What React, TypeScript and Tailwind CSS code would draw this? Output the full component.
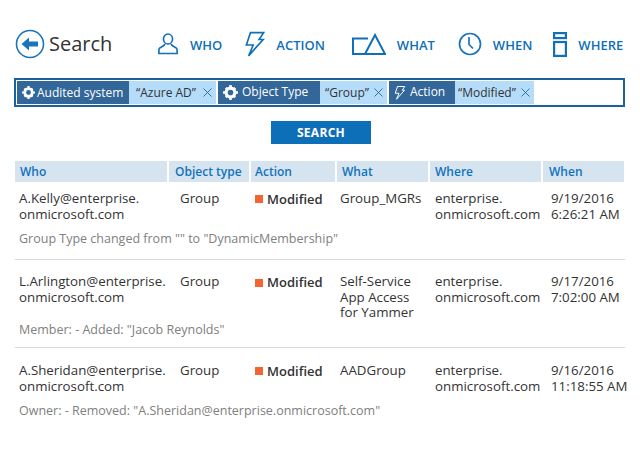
import type { ReactNode } from 'react';

const font = { fontFamily: '"Open Sans", "Noto Sans", sans-serif' };

const Back = () => (
  <svg width="30" height="30" viewBox="0 0 30 30" fill="none">
    <circle cx="15" cy="15" r="13.5" stroke="#1a74bb" strokeWidth="1.6" />
    <path d="M6.5 15 L14 8.5 V12.5 H23 V17.5 H14 V21.5 Z" fill="#1a74bb" />
  </svg>
);
const Who = () => (
  <svg width="20" height="24" viewBox="0 0 22 24" fill="none" stroke="#0f70b7" strokeWidth="1.8">
    <ellipse cx="11" cy="6.5" rx="5" ry="5.5" />
    <path d="M7.5 12 C7 15 1.5 15 1 18 V22.5 H21 V18 C20.500 15 15 15 14.500 12" />
  </svg>
);
const Bolt = ({ s = 20, h = 27, w = 1.8, c = '#0f70b7' }: { s?: number; h?: number; w?: number; c?: string }) => (
  <svg width={s} height={h} viewBox="0 0 22 28" fill="none" stroke={c} strokeWidth={w}>
    <path d="M6 1 H20.500 L15.500 8.500 H20 L4 26.500 L9 14.500 H1.500 Z" />
  </svg>
);
const What = () => (
  <svg width="34" height="22" viewBox="0 0 34 22" fill="none" stroke="#0f70b7" strokeWidth="2">
    <path d="M13 21 H1 V5.500 H16" />
    <path d="M13 21 L23 2 L33 21 Z" />
  </svg>
);
const Clock = () => (
  <svg width="24" height="24" viewBox="0 0 24 24" fill="none" stroke="#1a74bb" strokeWidth="1.700">
    <circle cx="12" cy="12" r="10.500" />
    <path d="M11 5 V12.500 L15 16.500" />
  </svg>
);
const Where = () => (
  <svg width="14" height="25" viewBox="0 0 14 25" fill="none" stroke="#0f70b7" strokeWidth="2.200">
    <rect x="1.100" y="1.100" width="11.800" height="5" />
    <rect x="1.100" y="10" width="11.800" height="13.900" />
  </svg>
);
const Gear = ({ s = 13 }: { s?: number }) => (
  <svg width={s} height={s} viewBox="0 0 24 24" className="shrink-0">
    <circle cx="12" cy="12" r="7" fill="none" stroke="#fff" strokeWidth="5" />
    <path d="M10 0h4v5h-4zM10 19h4v5h-4zM0 10h5v4H0zM19 10h5v4h-5zM3 6l3-3 3 3-3 3zM15 18l3-3 3 3-3 3zM15 6l3-3 3 3-3 3zM3 18l3-3 3 3-3 3z" fill="#fff" />
  </svg>
);
const X = () => (
  <svg width="9" height="9" viewBox="0 0 9 9" stroke="#23679d" strokeWidth="0.900" className="shrink-0">
    <path d="M0.500 0.500 L8.500 8.500 M8.500 0.500 L0.500 8.500" />
  </svg>
);

const Nav = ({ icon, label, gap, ml }: { icon: ReactNode; label: string; gap: string; ml: string }) => (
  <div className={`flex items-center ${gap} ${ml}`}>
    {icon}
    <span className="text-[13px] font-semibold text-[#0f70b7] leading-none mt-[2px]">{label}</span>
  </div>
);

const Chip = ({ icon, k, v, kw, vw, kc, pl, gap }: { icon: ReactNode; k: string; v: string; kw: string; vw: string; kc: string; pl: string; gap: string }) => (
  <div className="flex h-[23px]">
    <div className={`flex items-center pl-[5px] bg-[#336699] text-white text-[12px] ${gap} ${kw}`}>
      {icon}
      <span className={kc}>{k}</span>
    </div>
    <div className={`flex items-center justify-between pr-[4px] bg-[#b5dcf9] text-[#333] text-[12px] ${pl} ${vw}`}>
      <span className="whitespace-nowrap">{v}</span>
      <X />
    </div>
  </div>
);

const cols = 'grid grid-cols-[152px_80px_84px_91px_111px_81px] gap-x-[2px]';

const Row = ({ who, what, date, time, note, h, pt, mt, lead, border }: { who: string[]; what: string[]; date: string; time: string; note: string; h: string; pt: string; mt: string; lead: string; border: boolean }) => (
  <div className={`${h} ${border ? 'border-b border-[#dadada]' : ''}`}>
    <div className={`${cols} text-[13.3px] text-[#333] ${lead} ${pt}`}>
      <div className="pl-[4px] whitespace-nowrap">{who.map((w) => <div key={w}>{w}</div>)}</div>
      <div className="pl-[11px]">Group</div>
      <div className="pl-[4px] flex items-start gap-[4px] font-semibold text-[13px]">
        <span className="w-[8px] h-[8px] bg-[#f26430] mt-[5px] shrink-0" />
        <span className="mt-[1px]">Modified</span>
      </div>
      <div className="pl-[3px] whitespace-nowrap">{what.map((w) => <div key={w}>{w}</div>)}</div>
      <div className="pl-[5px] whitespace-nowrap"><div>enterprise.</div><div>onmicrosoft.com</div></div>
      <div className="pl-[8px] whitespace-nowrap"><div>{date}</div><div>{time}</div></div>
    </div>
    <div className={`text-[12.5px] leading-[16px] text-[#808080] pl-[4px] whitespace-nowrap ${mt}`}>{note}</div>
  </div>
);

export default function App() {
  return (
    <div className="w-[640px] h-[450px] bg-white overflow-hidden px-[15px] pt-[14px]" style={font}>
      <div className="flex items-center h-[60px]">
        <Back />
        <span className="text-[20px] text-[#333] ml-[4px] w-[100px] leading-none">Search</span>
        <Nav icon={<Who />} label="WHO" gap="gap-[12px]" ml="ml-[9px]" />
        <Nav icon={<Bolt />} label="ACTION" gap="gap-[11px]" ml="ml-[23px]" />
        <Nav icon={<What />} label="WHAT" gap="gap-[11px]" ml="ml-[27px]" />
        <Nav icon={<Clock />} label="WHEN" gap="gap-[11px]" ml="ml-[23px]" />
        <Nav icon={<Where />} label="WHERE" gap="gap-[11px]" ml="ml-[21px]" />
      </div>
      <div className="-ml-[1px] mt-[4px] w-[611px] h-[29px] border-2 border-[#1b6299] p-[1px] flex gap-[2px]">
        <Chip icon={<Gear />} k="Audited system" v="“Azure AD”" kw="w-[112px]" vw="w-[87px]" kc="" pl="pl-[7px]" gap="gap-[2px]" />
        <Chip icon={<Gear s={15} />} k="Object Type" v="“Group”" kw="w-[102px]" vw="w-[67px]" kc="-mt-[2px]" pl="pl-[5px]" gap="gap-[4px]" />
        <Chip icon={<Bolt s={12} h={14} w={2} c="#fff" />} k="Action" v="“Modified”" kw="w-[66px]" vw="w-[79px]" kc="-mt-[2px]" pl="pl-[3px]" gap="gap-[4px]" />
      </div>
      <div className="flex justify-center mt-[14px] ml-[2px]">
        <div className="w-[100px] h-[23px] bg-[#0d6fb8] text-white text-[12px] font-bold flex items-center justify-center tracking-[0.3px]">SEARCH</div>
      </div>
      <div className={`${cols} mt-[17px] h-[21px] text-[12px] font-semibold text-[#1173bc]`}>
        <div className="bg-[#d6e4f0] pl-[5px] flex items-center">Who</div>
        <div className="bg-[#d6e4f0] pl-[6px] flex items-center whitespace-nowrap">Object type</div>
        <div className="bg-[#d6e4f0] pl-[4px] flex items-center">Action</div>
        <div className="bg-[#d6e4f0] pl-[5px] flex items-center">What</div>
        <div className="bg-[#d6e4f0] pl-[5px] flex items-center">Where</div>
        <div className="bg-[#d6e4f0] pl-[6px] flex items-center">When</div>
      </div>
      <Row who={['A.Kelly@enterprise.', 'onmicrosoft.com']} what={['Group_MGRs']} date="9/19/2016" time="6:26:21 AM" note={'Group Type changed from "" to "DynamicMembership"'} h="h-[78px]" pt="pt-[8px]" mt="mt-[9px]" lead="leading-[16px]" border />
      <Row who={['L.Arlington@enterprise.', 'onmicrosoft.com']} what={['Self-Service', 'App Access', 'for Yammer']} date="9/17/2016" time="7:02:00 AM" note={'Member: - Added: "Jacob Reynolds"'} h="h-[88px]" pt="pt-[14px]" mt="mt-[1px]" lead="leading-[15.5px]" border />
      <Row who={['A.Sheridan@enterprise.', 'onmicrosoft.com']} what={['AADGroup']} date="9/16/2016" time="11:18:55 AM" note={'Owner: - Removed: "A.Sheridan@enterprise.onmicrosoft.com"'} h="h-[78px]" pt="pt-[14px]" mt="mt-[9px]" lead="leading-[16px]" border={false} />
    </div>
  );
}
